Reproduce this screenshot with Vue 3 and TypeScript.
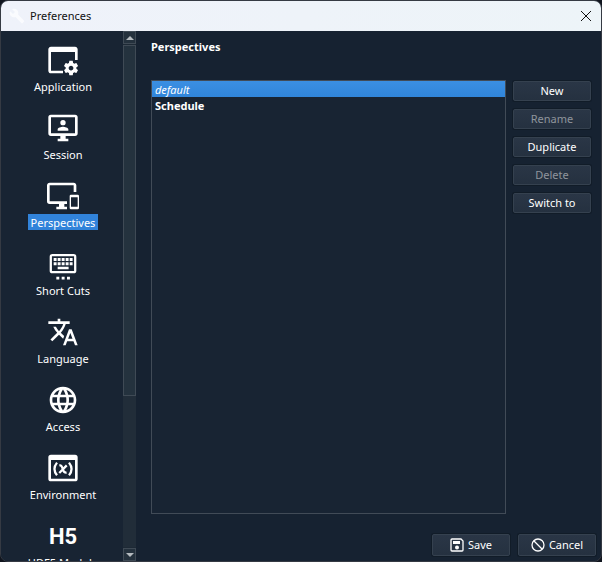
<script setup lang="ts">
import { ref } from 'vue'

interface Section {
  name: string
  icon: string
  glyph?: string
}

interface Action {
  label: string
  enabled: boolean
}

const gear =
  'M19.14 12.94c.04-.3.06-.61.06-.94 0-.32-.02-.64-.07-.94l2.03-1.58c.18-.14.23-.41.12-.61l-1.92-3.32c-.12-.22-.37-.29-.59-.22l-2.39.96c-.5-.38-1.03-.7-1.62-.94l-.36-2.54c-.04-.24-.24-.41-.48-.41h-3.84c-.24 0-.43.17-.47.41l-.36 2.54c-.59.24-1.13.57-1.62.94l-2.39-.96c-.22-.08-.47 0-.59.22L2.74 8.87c-.12.21-.08.47.12.61l2.03 1.58c-.05.3-.09.63-.09.94s.02.64.07.94l-2.03 1.58c-.18.14-.23.41-.12.61l1.92 3.32c.12.22.37.29.59.22l2.39-.96c.5.38 1.03.7 1.62.94l.36 2.54c.05.24.24.41.48.41h3.84c.24 0 .44-.17.47-.41l.36-2.54c.59-.24 1.13-.56 1.62-.94l2.39.96c.22.08.47 0 .59-.22l1.92-3.32c.12-.22.07-.47-.12-.61l-2.01-1.58zM12 15.2c-1.77 0-3.2-1.43-3.2-3.2s1.43-3.2 3.2-3.2 3.2 1.43 3.2 3.2-1.43 3.2-3.2 3.2z'

const sections: Section[] = [
  { name: 'Application', icon: 'M21 2H3C1.9 2 1 2.9 1 4V20C1 21.1 1.9 22 3 22H12V20H3V6H21V12H23V4C23 2.9 22.1 2 21 2Z' },
  {
    name: 'Session',
    icon: 'M21 16V4H3V16H21M21 2A2 2 0 0 1 23 4V16A2 2 0 0 1 21 18H14V20H16V22H8V20H10V18H3A2 2 0 0 1 1 16V4A2 2 0 0 1 3 2H21ZM16 14H8V13C8 11.67 10.67 11 12 11S16 11.67 16 13V14M12 6A2 2 0 1 1 12 10A2 2 0 1 1 12 6Z',
  },
  {
    name: 'Perspectives',
    icon: 'M23 11H18A1 1 0 0 0 17 12V21A1 1 0 0 0 18 22H23A1 1 0 0 0 24 21V12A1 1 0 0 0 23 11M23 20H18V13H23V20M20 2H2C.89 2 0 2.89 0 4V16A2 2 0 0 0 2 18H9V20H7V22H15V20H13V18H15V16H2V4H20V9H22V4C22 2.89 21.1 2 20 2Z',
  },
  {
    name: 'Short Cuts',
    icon: 'M4 4.500H20A2 2 0 0 1 22 6.500V17A2 2 0 0 1 20 19H4A2 2 0 0 1 2 17V6.500A2 2 0 0 1 4 4.500M3.700 6.200V17.300H20.300V6.200H3.700M5 7.500H7.200V9.700H5V7.500M8 7.500H10.200V9.700H8V7.500M11 7.500H13.200V9.700H11V7.500M14 7.500H16.200V9.700H14V7.500M17 7.500H19.200V9.700H17V7.500M5 10.700H7.200V12.900H5V10.700M8 10.700H10.200V12.900H8V10.700M11 10.700H13.200V12.900H11V10.700M14 10.700H16.200V12.900H14V10.700M17 10.700H19.200V12.900H17V10.700M8 14H16.200V16H8V14M7 21.500H9.200V23.700H7V21.500M11 21.500H13.200V23.700H11V21.500M15 21.500H17.200V23.700H15V21.500Z',
  },
  {
    name: 'Language',
    icon: 'M12.87 15.07l-2.54-2.51.03-.03c1.74-1.94 2.98-4.17 3.71-6.53H17V4h-7V2H8v2H1v1.99h11.17C11.5 7.92 10.44 9.75 9 11.35 8.07 10.32 7.3 9.19 6.69 8h-2c.73 1.63 1.73 3.17 2.98 4.56l-5.09 5.02L4 19l5-5 3.11 3.11.76-2.04zM18.5 10h-2L12 22h2l1.12-3h4.75L21 22h2l-4.5-12zm-2.62 7l1.62-4.33L19.12 17h-3.24z',
  },
  {
    name: 'Access',
    icon: 'M11.99 2C6.47 2 2 6.48 2 12s4.47 10 9.99 10C17.52 22 22 17.52 22 12S17.52 2 11.99 2zm6.93 6h-2.95c-.32-1.25-.78-2.45-1.38-3.56 1.84.63 3.37 1.91 4.33 3.56zM12 4.04c.83 1.2 1.48 2.53 1.91 3.96h-3.82c.43-1.43 1.08-2.76 1.91-3.96zM4.26 14C4.1 13.36 4 12.69 4 12s.1-1.36.26-2h3.38c-.08.66-.14 1.32-.14 2s.06 1.34.14 2H4.26zm.82 2h2.95c.32 1.25.78 2.45 1.38 3.56-1.84-.63-3.37-1.9-4.33-3.56zm2.95-8H5.08c.96-1.66 2.49-2.93 4.33-3.56C8.81 5.55 8.35 6.75 8.03 8zM12 19.96c-.83-1.2-1.48-2.53-1.91-3.96h3.82c-.43 1.43-1.08 2.76-1.91 3.96zM14.34 14H9.66c-.09-.66-.16-1.32-.16-2s.07-1.35.16-2h4.68c.09.65.16 1.32.16 2s-.07 1.34-.16 2zm.25 5.56c.6-1.11 1.06-2.31 1.38-3.56h2.95c-.96 1.65-2.49 2.93-4.33 3.56zM16.36 14c.08-.66.14-1.32.14-2s-.06-1.34-.14-2h3.38c.16.64.26 1.31.26 2s-.1 1.36-.26 2h-3.38z',
  },
  {
    name: 'Environment',
    icon: 'M21 2H3A2 2 0 0 0 1 4V20A2 2 0 0 0 3 22H21A2 2 0 0 0 23 20V4A2 2 0 0 0 21 2M21 20H3V6H21V20Z',
  },
  { name: 'HDF5 Module', icon: '', glyph: 'H5' },
]

const current = ref('Perspectives')
const perspectives = ['default', 'Schedule']
const selected = ref('default')

const actions: Action[] = [
  { label: 'New', enabled: true },
  { label: 'Rename', enabled: false },
  { label: 'Duplicate', enabled: true },
  { label: 'Delete', enabled: false },
  { label: 'Switch to', enabled: true },
]
</script>

<template>
  <div class="window">
    <header class="titlebar">
      <svg class="wrench" viewBox="0 0 24 24" aria-hidden="true">
        <path d="M22.7 19l-9.1-9.1c.9-2.3.4-5-1.5-6.9-2-2-5-2.4-7.4-1.3L9 6 6 9 1.6 4.7C.4 7.1.9 10.1 2.9 12.1c1.9 1.9 4.6 2.4 6.9 1.5l9.1 9.1c.4.4 1 .4 1.4 0l2.3-2.3c.5-.4.5-1.1.1-1.4z" />
      </svg>
      <span class="title">Preferences</span>
      <button class="close" type="button" aria-label="Close">
        <svg viewBox="0 0 12 12"><path d="M1 1L11 11M11 1L1 11" /></svg>
      </button>
    </header>

    <div class="body">
      <nav class="sections">
        <button
          v-for="s in sections"
          :key="s.name"
          type="button"
          class="section"
          :class="{ active: s.name === current }"
          @click="current = s.name"
        >
          <span v-if="s.glyph" class="glyph">{{ s.glyph }}</span>
          <svg v-else class="icon" viewBox="0 0 24 24" aria-hidden="true">
            <path :d="s.icon" fill-rule="evenodd" />
            <path v-if="s.name === 'Application'" :d="gear" transform="translate(11.3 11.3) scale(.56)" />
            <g v-if="s.name === 'Environment'" class="strokes">
              <path d="M7.500 8Q3.700 12.800 7.500 17.500M16.500 8Q20.300 12.800 16.500 17.500" />
              <path d="M9.300 10.200Q11 9.600 11.800 12.700T14.700 15.500M14.800 10L9.200 15.700" />
            </g>
          </svg>
          <span class="name">{{ s.name }}</span>
        </button>
      </nav>

      <div class="scrollbar">
        <button class="step" type="button" aria-label="Scroll up"><i class="up"></i></button>
        <div class="track"><div class="thumb"></div></div>
        <button class="step" type="button" aria-label="Scroll down"><i class="down"></i></button>
      </div>

      <main class="panel">
        <h1>Perspectives</h1>
        <div class="content">
          <ul class="list" role="listbox" aria-label="Perspectives">
            <li
              v-for="p in perspectives"
              :key="p"
              role="option"
              :aria-selected="p === selected"
              :class="{ chosen: p === selected, builtin: p === 'default' }"
              @click="selected = p"
            >
              {{ p }}
            </li>
          </ul>
          <div class="actions">
            <button v-for="a in actions" :key="a.label" class="button" type="button" :disabled="!a.enabled">
              {{ a.label }}
            </button>
          </div>
        </div>
        <footer class="footer">
          <button class="button" type="button">
            <svg viewBox="0 0 14 14" aria-hidden="true">
              <path class="line" d="M2 1H11L13 3V12Q13 13 12 13H2Q1 13 1 12V2Q1 1 2 1Z" />
              <path d="M3 3H10V6H3ZM7 7.500A2 2 0 1 1 7 11.500A2 2 0 1 1 7 7.500Z" />
            </svg>
            Save
          </button>
          <button class="button" type="button">
            <svg viewBox="0 0 14 14" aria-hidden="true">
              <circle class="line" cx="7" cy="7" r="6" />
              <path class="line" d="M3 3L11 11" />
            </svg>
            Cancel
          </button>
        </footer>
      </main>
    </div>
  </div>
</template>

<style>
body {
  background: #10151e;
}
</style>

<style scoped>
* {
  box-sizing: border-box;
}

.window {
  display: flex;
  flex-direction: column;
  height: 100vh;
  overflow: hidden;
  border: 1px solid #353a43;
  border-radius: 8px;
  background: #162231;
  color: #fff;
  font: 11px/18px 'Noto Sans', 'Open Sans', sans-serif;
}

button {
  margin: 0;
  padding: 0;
  border: 0;
  background: none;
  color: inherit;
  font: inherit;
}

.titlebar {
  display: flex;
  flex: none;
  align-items: center;
  gap: 5px;
  height: 30px;
  padding: 0 8px;
  background: linear-gradient(90deg, #eff2fa, #edf4f8);
  color: #111;
}

.wrench {
  width: 16px;
  height: 16px;
  fill: #fafbfe;
}

.title {
  flex: 1;
}

.close {
  display: flex;
  padding: 1px;
}

.close svg {
  width: 12px;
  height: 12px;
  fill: none;
  stroke: #111;
}

.body {
  display: flex;
  flex: 1;
  min-height: 0;
}

.sections {
  display: flex;
  flex: none;
  flex-direction: column;
  gap: 18px;
  width: 122px;
  padding: 13px 0 0 2px;
  overflow: hidden;
  background: #182433;
}

.section {
  display: flex;
  flex: none;
  flex-direction: column;
  align-items: center;
  gap: 2px;
  height: 50px;
}

.icon {
  width: 32px;
  height: 32px;
  fill: #fff;
}

.strokes {
  fill: none;
  stroke: #fff;
  stroke-width: 1.7;
}

.glyph {
  height: 32px;
  font-family: Roboto, sans-serif;
  font-size: 22px;
  font-weight: 700;
  line-height: 34px;
}

.name {
  height: 16px;
  padding: 0 3px;
}

.active .name {
  background: #3183da;
}

.scrollbar {
  display: flex;
  flex: none;
  flex-direction: column;
  gap: 1px;
  width: 13px;
  background: #1d2935;
}

.step {
  display: flex;
  flex: none;
  align-items: center;
  justify-content: center;
  height: 13px;
  border: 1px solid #3f4a55;
  background: #24313d;
}

.up,
.down {
  border: 4px solid transparent;
}

.up {
  border-top: 0;
  border-bottom: 4px solid #b5bbc0;
}

.down {
  border-top: 4px solid #b5bbc0;
  border-bottom: 0;
}

.track {
  flex: 1;
  background: #212d39;
}

.thumb {
  height: 70%;
  border: 1px solid #3f4a55;
  background: #24323e;
}

.panel {
  display: flex;
  flex: 1;
  flex-direction: column;
  min-width: 0;
  padding: 8px 5px 5px 15px;
}

h1 {
  margin: 0 0 25px;
  font-size: 11px;
  font-weight: 700;
  line-height: 16px;
}

.content {
  display: flex;
  flex: 1;
  gap: 7px;
  min-height: 0;
  padding-right: 5px;
}

.list {
  flex: 1;
  margin: 0;
  padding: 0;
  border: 1px solid #414b57;
  background: #182433;
  font-weight: 700;
  list-style: none;
}

.list li {
  height: 16px;
  padding: 0 3px;
}

.list .builtin {
  font-style: italic;
  font-weight: 400;
}

.list .chosen {
  background: linear-gradient(#3b8fe2, #3085da);
}

.actions {
  display: flex;
  flex: none;
  flex-direction: column;
  gap: 8px;
  width: 78px;
  padding-top: 1px;
}

.button {
  display: flex;
  align-items: center;
  justify-content: center;
  gap: 4px;
  height: 20px;
  border: 1px solid #35414f;
  border-radius: 2px;
  background: linear-gradient(#2a3646, #253140);
  box-shadow: 0 0 0 1px #111c28;
}

.button:disabled {
  color: #8f959c;
}

.footer {
  display: flex;
  justify-content: flex-end;
  gap: 8px;
  margin-top: 20px;
}

.footer .button {
  width: 78px;
  height: 22px;
}

.footer svg {
  width: 14px;
  height: 14px;
  fill: #fff;
}

.footer .line {
  fill: none;
  stroke: #fff;
  stroke-width: 1.3;
}
</style>
